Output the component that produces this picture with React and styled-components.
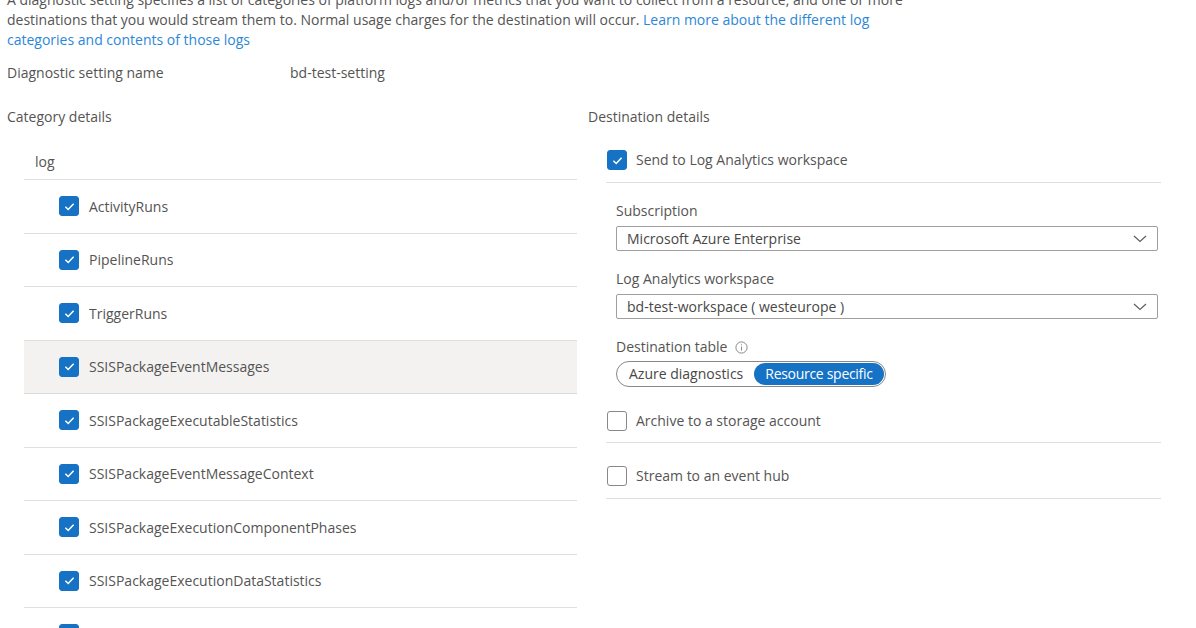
import React from "react";
import styled, { createGlobalStyle } from "styled-components";

const Global = createGlobalStyle`
  html, body { margin: 0; padding: 0; background: #ffffff; }
  body { font-family: "Open Sans", "Noto Sans", sans-serif; color: #555453; font-size: 14px; overflow: hidden; }
`;

const Page = styled.div`
  width: 1196px;
  height: 628px;
  overflow: hidden;
  padding-left: 7px;
  box-sizing: border-box;
`;

const Intro = styled.p`
  margin: -10px 0 0 0;
  line-height: 20px;
  font-size: 14px;
  white-space: nowrap;
`;

const Link = styled.a`
  color: #2b88d8;
  text-decoration: none;
`;

const NameRow = styled.div`
  display: flex;
  margin-top: 13px;
  line-height: 20px;
`;

const NameLabel = styled.div`
  width: 283px;
`;

const Columns = styled.div`
  display: grid;
  grid-template-columns: 581px 572px;
  margin-top: 24px;
`;

const SectionTitle = styled.div`
  line-height: 20px;
`;

const List = styled.div`
  margin-left: 17px;
  width: 553px;
`;

const ListHeader = styled.div`
  padding: 25px 0 0 11px;
  height: 53px;
  box-sizing: border-box;
  line-height: 20px;
  border-bottom: 1px solid #e1dfdd;
`;

const Row = styled.div`
  display: flex;
  align-items: center;
  gap: 10px;
  height: 53.5px;
  box-sizing: border-box;
  padding-left: 35px;
  border-bottom: 1px solid ${(p) => (p.$active ? "#dcdad8" : "#e1dfdd")};
  background: ${(p) => (p.$active ? "#f3f2f1" : "transparent")};
`;

const Box = styled.span`
  width: 20px;
  height: 20px;
  box-sizing: border-box;
  border-radius: 3px;
  display: inline-flex;
  align-items: center;
  justify-content: center;
  flex-shrink: 0;
  background: ${(p) => (p.$checked ? "#1672c4" : "#ffffff")};
  border: 1px solid ${(p) => (p.$checked ? "#1672c4" : "#8a8886")};
`;

const Check = ({ checked }) => (
  <Box $checked={checked}>
    {checked && (
      <svg width="13" height="13" viewBox="0 0 12 12">
        <path d="M2.2 6.3 L4.8 8.8 L9.8 3.4" fill="none" stroke="#ffffff" strokeWidth="1.4" />
      </svg>
    )}
  </Box>
);

const Right = styled.div``;

const DestRow = styled.div`
  display: flex;
  align-items: center;
  gap: 9px;
  margin-left: 18px;
  width: 554px;
  padding: ${(p) => p.$pad || "23px 0 12px 1px"};
  border-bottom: 1px solid #e1dfdd;
  line-height: 20px;
`;

const Sub = styled.div`
  margin-left: 28px;
  width: 542px;
  display: flex;
  flex-direction: column;
`;

const FieldLabel = styled.div`
  margin-top: 18px;
  line-height: 20px;
  display: flex;
  align-items: center;
  gap: 8px;
`;

const Select = styled.div`
  margin-top: 5px;
  height: 25px;
  box-sizing: border-box;
  border: 1px solid #a19f9d;
  border-radius: 2px;
  display: flex;
  align-items: center;
  justify-content: space-between;
  padding: 0 10px 0 10px;
  color: #484746;
`;

const Chevron = () => (
  <svg width="14" height="8" viewBox="0 0 14 8">
    <path d="M1 1 L7 6.5 L13 1" fill="none" stroke="#605e5c" strokeWidth="1.2" />
  </svg>
);

const Info = () => (
  <svg width="13" height="13" viewBox="0 0 13 13">
    <circle cx="6.5" cy="6.5" r="5.6" fill="none" stroke="#8a8886" strokeWidth="1" />
    <path d="M6.5 5.6 V9.6" stroke="#8a8886" strokeWidth="1" />
    <circle cx="6.5" cy="3.8" r="0.6" fill="#8a8886" />
  </svg>
);

const Toggle = styled.div`
  margin-top: 4px;
  width: 270px;
  height: 26px;
  box-sizing: border-box;
  border: 1px solid #8a8886;
  border-radius: 13px;
  display: flex;
  align-items: center;
  padding: 0 1px 0 12px;
`;

const ToggleOption = styled.span`
  flex: ${(p) => (p.$selected ? "0 0 130px" : "1")};
  height: 22px;
  line-height: 22px;
  border-radius: 11px;
  white-space: nowrap;
  color: ${(p) => (p.$selected ? "#ffffff" : "#484746")};
  background: ${(p) => (p.$selected ? "#1672c4" : "transparent")};
  text-align: ${(p) => (p.$selected ? "center" : "left")};
  letter-spacing: ${(p) => (p.$selected ? "-0.3px" : "0")};
`;

const categories = [
  "ActivityRuns",
  "PipelineRuns",
  "TriggerRuns",
  "SSISPackageEventMessages",
  "SSISPackageExecutableStatistics",
  "SSISPackageEventMessageContext",
  "SSISPackageExecutionComponentPhases",
  "SSISPackageExecutionDataStatistics",
  "SSISIntegrationRuntimeLogs",
];

export default function App() {
  return (
    <Page>
      <Global />
      <Intro>
        A diagnostic setting specifies a list of categories of platform logs and/or metrics that you want to collect from a resource, and one or more
        <br />
        destinations that you would stream them to. Normal usage charges for the destination will occur.{" "}
        <Link href="#">
          Learn more about the different log
          <br />
          categories and contents of those logs
        </Link>
      </Intro>
      <NameRow>
        <NameLabel>Diagnostic setting name</NameLabel>
        <div>bd-test-setting</div>
      </NameRow>
      <Columns>
        <div>
          <SectionTitle>Category details</SectionTitle>
          <List>
            <ListHeader>log</ListHeader>
            {categories.map((c) => (
              <Row key={c} $active={c === "SSISPackageEventMessages"}>
                <Check checked />
                <span>{c}</span>
              </Row>
            ))}
          </List>
        </div>
        <Right>
          <SectionTitle>Destination details</SectionTitle>
          <DestRow>
            <Check checked />
            <span>Send to Log Analytics workspace</span>
          </DestRow>
          <Sub>
            <FieldLabel>Subscription</FieldLabel>
            <Select>
              <span>Microsoft Azure Enterprise</span>
              <Chevron />
            </Select>
            <FieldLabel>Log Analytics workspace</FieldLabel>
            <Select>
              <span>bd-test-workspace ( westeurope )</span>
              <Chevron />
            </Select>
            <FieldLabel>
              Destination table <Info />
            </FieldLabel>
            <Toggle>
              <ToggleOption>Azure diagnostics</ToggleOption>
              <ToggleOption $selected>Resource specific</ToggleOption>
            </Toggle>
          </Sub>
          <DestRow $pad="24px 0 11px 1px">
            <Check />
            <span>Archive to a storage account</span>
          </DestRow>
          <DestRow>
            <Check />
            <span>Stream to an event hub</span>
          </DestRow>
        </Right>
      </Columns>
    </Page>
  );
}
